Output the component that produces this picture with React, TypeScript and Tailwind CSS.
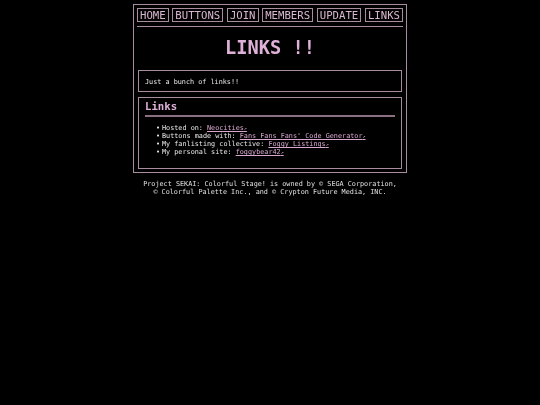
import React from "react";

const navItems = ["HOME", "BUTTONS", "JOIN", "MEMBERS", "UPDATE", "LINKS"];

const links = [
  { label: "Hosted on: ", text: "Neocities" },
  { label: "Buttons made with: ", text: "Fans Fans Fans' Code Generator" },
  { label: "My fanlisting collective: ", text: "Foggy Listings" },
  { label: "My personal site: ", text: "foggybear42" },
];

const ExtLink: React.FC<{ text: string }> = ({ text }) => (
  <a href="#" className="text-[#d8a8d0] underline">
    {text}
    <span className="text-[5px] align-baseline">↗</span>
  </a>
);

export default function App() {
  return (
    <div className="min-h-[405px] bg-black text-[#e8e8e8] font-['DejaVu_Sans_Mono',monospace] pt-[4px] antialiased will-change-transform">
      <div className="w-[274px] mx-auto border border-[#a88ca0] p-[3px]">
        <nav className="flex justify-between pb-[4px] border-b border-[#a88ca0]">
          {navItems.map((item) => (
            <a
              key={item}
              href="#"
              className="border border-[#a88ca0] px-[2px] pt-[1px] text-[10.67px] leading-[11px] text-[#d8b8d0]"
            >
              {item}
            </a>
          ))}
        </nav>

        <h1 className="text-center text-[18.67px] font-bold leading-[24px] text-[#dfb0d8] mt-[9px] mb-[10px]">
          LINKS !!
        </h1>

        <div className="mx-[1px] border border-[#a88ca0] px-[6px] pt-[7px] pb-[5px] text-[6.8px] leading-[8px]">
          Just a bunch of links!!
        </div>

        <div className="mx-[1px] mt-[5px] border border-[#a88ca0] px-[6px] pt-[2px] pb-[12px]">
          <h2 className="text-[10.67px] font-bold leading-[14px] text-[#dfb0d8]">Links</h2>
          <div className="h-[2px] bg-[#8a7080] mt-[1px]" />
          <ul className="pl-[11px] mt-[7px] text-[6.8px] leading-[8px]">
            {links.map((l) => (
              <li key={l.text}>
                <span className="inline-block w-[6px]">•</span>
                {l.label}
                <ExtLink text={l.text} />
              </li>
            ))}
          </ul>
        </div>
      </div>

      <p className="text-center text-[6.8px] leading-[8px] mt-[7px] text-[#e0e0e0]">
        Project SEKAI: Colorful Stage! is owned by © SEGA Corporation,
        <br />© Colorful Palette Inc., and © Crypton Future Media, INC.
      </p>
    </div>
  );
}
